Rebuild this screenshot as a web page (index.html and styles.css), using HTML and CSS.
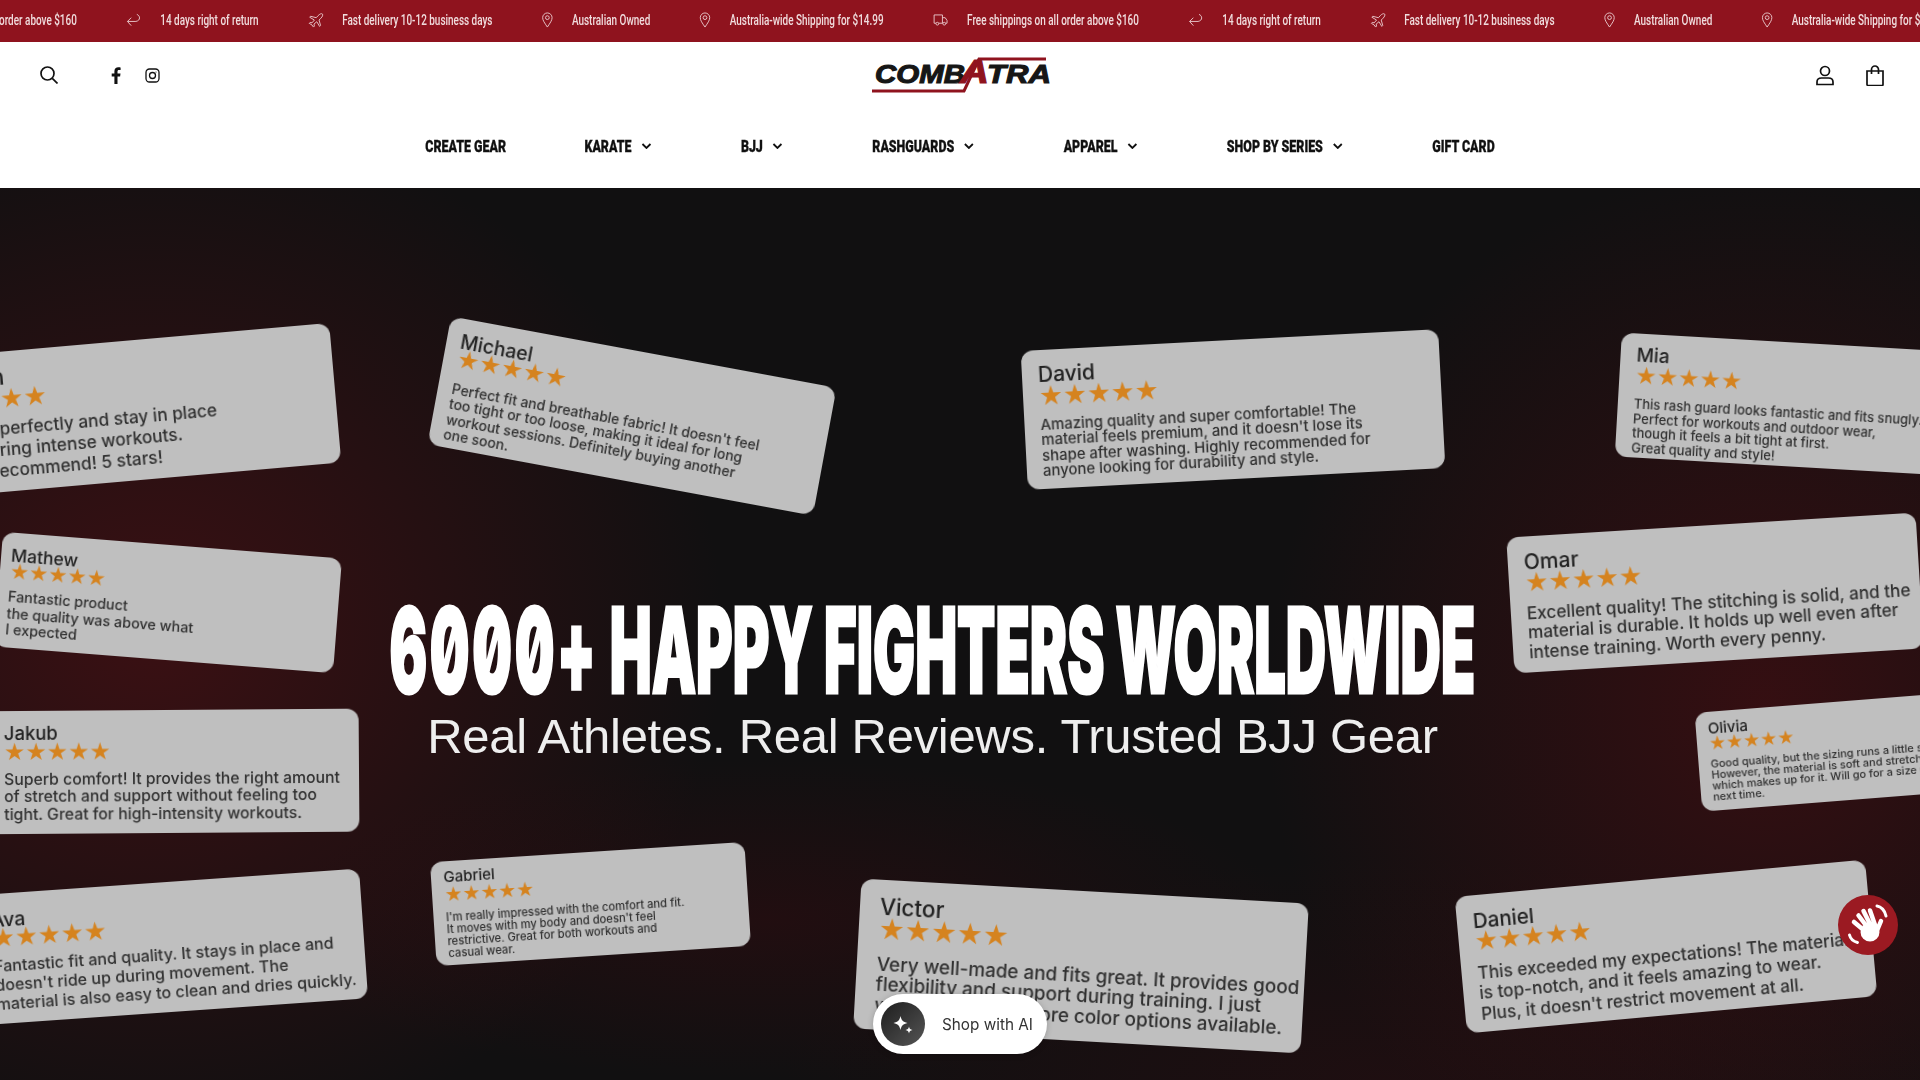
FILE: index.html
```html
<!DOCTYPE html>
<html lang="en">
<head>
	<title>Combatra</title>
	<meta charset="UTF-8">
	<meta name="viewport" content="width=device-width, initial-scale=1.0">
	<link rel="stylesheet" href="styles.css">
</head>
<body>
	<svg class="defs" width="0" height="0">
		<symbol id="i-return" viewBox="0 0 16 16"><path d="M11 1.5c3.5 1 4.5 6.5-1 7.5H1M5 5 1 9l4 4.500"/></symbol>
		<symbol id="i-plane" viewBox="0 0 16 16"><path d="M15 1c-1-.8-3 .2-4.500 1.800L8.500 5 2.500 3.500 1.500 4.500 6.500 7.500 4 10.500 2 10 1 11l3 1.800L5.500 15l1-1-.4-2.200 3-2.500 3 5 1-1L11.500 7.500l2-2C15 4 16 2 15 1Z"/></symbol>
		<symbol id="i-pin" viewBox="0 0 12 17"><path d="M6 16C3 11.500 1 9 1 6a5 5 0 0 1 10 0c0 3-2 5.500-5 10Z"/><circle cx="6" cy="6" r="2"/></symbol>
		<symbol id="i-truck" viewBox="0 0 16 13"><path d="M3 10H1V1h9v9H6M10 4h3l2 3v3h-1.500M10 10h.5"/><circle cx="4.500" cy="10.500" r="1.500"/><circle cx="12" cy="10.500" r="1.500"/></symbol>
		<symbol id="i-chev" viewBox="0 0 10 6"><path d="M1 1l4 4 4-4"/></symbol>
	</svg>

	<div class="announce">
		<div class="ticker">
			<div class="tick"><span>Free shippings on all order above $160</span></div>
			<div class="tick"><svg class="tick-icon"><use href="#i-return"/></svg><span>14 days right of return</span></div>
			<div class="tick"><svg class="tick-icon"><use href="#i-plane"/></svg><span>Fast delivery 10-12 business days</span></div>
			<div class="tick"><svg class="tick-icon tick-pin"><use href="#i-pin"/></svg><span>Australian Owned</span></div>
			<div class="tick"><svg class="tick-icon tick-pin"><use href="#i-pin"/></svg><span>Australia-wide Shipping for $14.99</span></div>
			<div class="tick"><svg class="tick-icon tick-truck"><use href="#i-truck"/></svg><span>Free shippings on all order above $160</span></div>
			<div class="tick"><svg class="tick-icon"><use href="#i-return"/></svg><span>14 days right of return</span></div>
			<div class="tick"><svg class="tick-icon"><use href="#i-plane"/></svg><span>Fast delivery 10-12 business days</span></div>
			<div class="tick"><svg class="tick-icon tick-pin"><use href="#i-pin"/></svg><span>Australian Owned</span></div>
			<div class="tick"><svg class="tick-icon tick-pin"><use href="#i-pin"/></svg><span>Australia-wide Shipping for $14.99</span></div>
		</div>
	</div>

	<header class="site-head">
		<div class="top-row">
			<div class="top-left">
				<svg class="ico ico-search" viewBox="0 0 18 18"><circle cx="7.500" cy="7.500" r="6.500"/><path d="M12.300 12.300 17.500 17.500"/></svg>
				<svg class="ico-fb" viewBox="0 0 10 17"><path d="M6.500 17V9.400h2.600l.4-3H6.500V4.600c0-.9.300-1.500 1.500-1.500h1.600V.4C9.300.3 8.400.2 7.300.2 5 .2 3.400 1.600 3.400 4.200v2.200H.7v3h2.700V17Z"/></svg>
				<svg class="ico ico-ig" viewBox="0 0 15 15"><rect x="1" y="1" width="13" height="13" rx="3.500"/><circle cx="7.500" cy="7.500" r="3"/><circle class="dot" cx="11" cy="4" r=".6"/></svg>
			</div>
			<a class="logo" href="#">
				<svg viewBox="0 0 180 36" width="180" height="36">
					<path class="logo-line" d="M0 34H92L107 2H174" />
					<text class="logo-text" x="3" y="26" textLength="90" lengthAdjust="spacingAndGlyphs">COMB</text>
					<text class="logo-text logo-a" x="88" y="26" textLength="29" lengthAdjust="spacingAndGlyphs">A</text>
					<text class="logo-text" x="115" y="26" textLength="64" lengthAdjust="spacingAndGlyphs">TRA</text>
				</svg>
			</a>
			<div class="top-right">
				<svg class="ico ico-user" viewBox="0 0 18 20"><circle cx="9" cy="5.500" r="4.500"/><path d="M1 19v-2.500C1 14 3 12.500 5.500 12.500h7c2.500 0 4.500 1.500 4.500 4V19Z"/></svg>
				<svg class="ico ico-bag" viewBox="0 0 18 21"><path d="M1 6h16v13.500a1 1 0 0 1-1 1H2a1 1 0 0 1-1-1ZM5.500 9V4.500a3.500 3.500 0 0 1 7 0V9"/></svg>
			</div>
		</div>
		<nav class="main-nav">
			<a class="nav-first" href="#">CREATE GEAR</a>
			<a href="#">KARATE <svg class="chev"><use href="#i-chev"/></svg></a>
			<a href="#">BJJ <svg class="chev"><use href="#i-chev"/></svg></a>
			<a href="#">RASHGUARDS <svg class="chev"><use href="#i-chev"/></svg></a>
			<a href="#">APPAREL <svg class="chev"><use href="#i-chev"/></svg></a>
			<a href="#">SHOP BY SERIES <svg class="chev"><use href="#i-chev"/></svg></a>
			<a href="#">GIFT CARD</a>
		</nav>
	</header>

	<section class="hero">
		<article class="card card-jordan">
			<h3>Jordan</h3>
			<div class="stars">★★★★★</div>
			<p>They fit perfectly and stay in place<br>even during intense workouts.<br>Highly recommend! 5 stars!</p>
		</article>
		<article class="card card-michael">
			<h3>Michael</h3>
			<div class="stars">★★★★★</div>
			<p>Perfect fit and breathable fabric! It doesn't feel<br>too tight or too loose, making it ideal for long<br>workout sessions. Definitely buying another<br>one soon.</p>
		</article>
		<article class="card card-david">
			<h3>David</h3>
			<div class="stars">★★★★★</div>
			<p>Amazing quality and super comfortable! The<br>material feels premium, and it doesn't lose its<br>shape after washing. Highly recommended for<br>anyone looking for durability and style.</p>
		</article>
		<article class="card card-mia">
			<h3>Mia</h3>
			<div class="stars">★★★★★</div>
			<p>This rash guard looks fantastic and fits snugly.<br>Perfect for workouts and outdoor wear,<br>though it feels a bit tight at first.<br>Great quality and style!</p>
		</article>
		<article class="card card-mathew">
			<h3>Mathew</h3>
			<div class="stars">★★★★★</div>
			<p>Fantastic product<br>the quality was above what<br>I expected</p>
		</article>
		<article class="card card-omar">
			<h3>Omar</h3>
			<div class="stars">★★★★★</div>
			<p>Excellent quality! The stitching is solid, and the<br>material is durable. It holds up well even after<br>intense training. Worth every penny.</p>
		</article>
		<article class="card card-jakub">
			<h3>Jakub</h3>
			<div class="stars">★★★★★</div>
			<p>Superb comfort! It provides the right amount<br>of stretch and support without feeling too<br>tight. Great for high-intensity workouts.</p>
		</article>
		<article class="card card-olivia">
			<h3>Olivia</h3>
			<div class="stars">★★★★★</div>
			<p>Good quality, but the sizing runs a little small.<br>However, the material is soft and stretchable,<br>which makes up for it. Will go for a size up<br>next time.</p>
		</article>
		<article class="card card-ava">
			<h3>Ava</h3>
			<div class="stars">★★★★★</div>
			<p>Fantastic fit and quality. It stays in place and<br>doesn't ride up during movement. The<br>material is also easy to clean and dries quickly.</p>
		</article>
		<article class="card card-gabriel">
			<h3>Gabriel</h3>
			<div class="stars">★★★★★</div>
			<p>I'm really impressed with the comfort and fit.<br>It moves with my body and doesn't feel<br>restrictive. Great for both workouts and<br>casual wear.</p>
		</article>
		<article class="card card-victor">
			<h3>Victor</h3>
			<div class="stars">★★★★★</div>
			<p>Very well-made and fits great. It provides good<br>flexibility and support during training. I just<br>wish there were more color options available.</p>
		</article>
		<article class="card card-daniel">
			<h3>Daniel</h3>
			<div class="stars">★★★★★</div>
			<p>This exceeded my expectations! The material<br>is top-notch, and it feels amazing to wear.<br>Plus, it doesn't restrict movement at all.</p>
		</article>

		<div class="hero-copy">
			<h1><span class="count">6000+</span> HAPPY FIGHTERS WORLDWIDE</h1>
			<h2>Real Athletes. Real Reviews. Trusted BJJ Gear</h2>
		</div>
	</section>

	<button class="shop-ai">
		<span class="shop-ai-dot">
			<svg viewBox="0 0 44 44" width="44" height="44"><path d="M19.500 14c1 4.500 2.500 6 7 7-4.500 1-6 2.500-7 7-1-4.500-2.500-6-7-7 4.500-1 6-2.500 7-7ZM28 24.500c.5 2.200 1.300 3 3.500 3.500-2.200.5-3 1.300-3.500 3.500-.5-2.200-1.300-3-3.500-3.500 2.200-.5 3-1.300 3.500-3.500Z"/></svg>
		</span>
		Shop with AI
	</button>

	<div class="chat-bubble">
		<svg viewBox="0 0 60 60" width="60" height="60">
			<g class="hand">
				<path d="M16 27 28 37M20.500 20.500 30 33M25.500 16 33 31M32 15.500 37 30M43 26 38 38"/>
				<circle cx="32" cy="37" r="9.500"/>
			</g>
			<path class="wave" d="M39 11c4 .5 8 4.500 9 10M11.500 40c1 4 4 6.500 8 7.500"/>
		</svg>
	</div>
</body>
</html>
```

FILE: styles.css
```css
* {box-sizing: border-box;}
html, body {height: 100%;}
body {
	margin: 0;
	overflow: hidden;
	background: #111;
	font-family: "Inter", "Liberation Sans", sans-serif;
}
.defs {position: absolute;}
a {color: inherit; text-decoration: none;}

/* announcement bar, no condensed font here so the strip is squeezed */
.announce {
	height: 42px;
	overflow: hidden;
	background: #8f131e;
	color: #f0dcdd;
}
.ticker {
	--sq: .71;
	display: flex;
	align-items: center;
	gap: calc(49.500px / var(--sq));
	height: 100%;
	padding-bottom: 2px;
	margin-left: -95px;
	width: max-content;
	font-family: "Roboto", sans-serif;
	font-size: 14px;
	font-weight: 500;
	white-space: nowrap;
	transform: scaleX(var(--sq));
	transform-origin: left center;
}
.tick {
	display: flex;
	align-items: center;
	gap: calc(19px / var(--sq));
}
.tick-icon {
	width: calc(15px / var(--sq));
	height: 15px;
	fill: none;
	stroke: #e9c9cc;
	stroke-width: 1;
	transform: scaleX(calc(1 / var(--sq)));
}
.tick-pin {width: calc(11px / var(--sq)); height: 16px;}
.tick-truck {height: 12px;}

/* header */
.site-head {
	height: 146px;
	background: #fff;
	color: #111;
}
.top-row {
	display: grid;
	grid-template-columns: 1fr auto 1fr;
	align-items: center;
	height: 66px;
	padding: 0 36px 0 40px;
}
.top-left, .top-right {display: flex; align-items: center;}
.top-right {justify-content: flex-end; gap: 32px;}
.ico {
	fill: none;
	stroke: #111;
	stroke-width: 1.7;
}
.ico-search {width: 18px; height: 18px; margin-right: 53px;}
.ico-fb {width: 10px; height: 17px; margin-right: 24px; fill: #111;}
.ico-ig {width: 15px; height: 15px; stroke-width: 1.3;}
.ico-ig .dot {fill: #111; stroke: none;}
.ico-user, .ico-bag {width: 18px; height: 21px;}
.logo {display: block; height: 36px;}
.logo-line {fill: none; stroke: #8f131e; stroke-width: 3;}
.logo-text {
	font-family: "Liberation Sans", sans-serif;
	font-size: 26px;
	font-weight: 700;
	font-style: italic;
	fill: #161616;
	stroke: #161616;
	stroke-width: 1.1;
}
.logo-a {fill: #8f131e; stroke: #8f131e; font-size: 33px;}

.main-nav {
	--sq: .775;
	display: flex;
	justify-content: center;
	align-items: center;
	gap: calc(89.500px / var(--sq));
	height: 78px;
	padding-bottom: 2px;
	font-family: "Roboto", sans-serif;
	font-weight: 900;
	font-size: 16px;
	-webkit-text-stroke: .3px #111;
	transform: scaleX(var(--sq));
}
.main-nav a {display: flex; align-items: center; gap: calc(10px / var(--sq)); white-space: nowrap;}
.main-nav .nav-first {margin-right: calc(-11px / var(--sq));}
.chev {
	width: calc(10px / var(--sq));
	height: 6px;
	fill: none;
	stroke: #111;
	stroke-width: 1.8;
	transform: scaleX(calc(1 / var(--sq)));
}

/* hero, the review cards sit on it as on a free canvas */
.hero {
	position: relative;
	height: 892px;
	overflow: hidden;
	background:
		radial-gradient(ellipse 570px 520px at 8% 50%, rgba(78, 16, 20, .68), transparent),
		radial-gradient(ellipse 500px 540px at 92% 58%, rgba(70, 14, 18, .68), transparent),
		radial-gradient(ellipse 520px 160px at 40% 82%, rgba(50, 12, 16, .5), transparent),
		radial-gradient(ellipse 600px 220px at 72% 100%, rgba(50, 12, 16, .4), transparent),
		#111011;
}
.card {
	position: absolute;
	padding: var(--pt) 0 0 var(--pl);
	border-radius: 12px;
	background: #bfbfbf;
	color: #303030;
	filter: blur(.35px);
	white-space: nowrap;
}
.card h3 {
	margin: 0;
	font-size: var(--name);
	font-weight: 500;
	line-height: var(--d);
	color: #222;
}
.stars {
	font-family: "DejaVu Sans", sans-serif;
	font-size: calc(var(--star) * 1.193);
	line-height: var(--d);
	color: #d5831f;
}
.card p {
	margin: var(--m) 0 0;
	font-size: var(--text);
	font-weight: 500;
	line-height: var(--lh);
}
.card-jordan {left: -84px; top: 153px; width: 420px; height: 140px; transform: rotate(-5deg);
	--pl: 15px; --pt: 14px; --d: 22px; --m: 7.500px; --lh: 21px; --text: 17.300px; --name: 23px; --star: 22px;}
.card-michael {left: 436px; top: 163px; width: 392px; height: 130px; transform: rotate(10.500deg);
	--pl: 14px; --pt: 14.500px; --d: 17px; --m: 14px; --lh: 15.500px; --text: 14px; --name: 19.500px; --star: 20.800px;}
.card-david {left: 1024px; top: 151.500px; width: 418px; height: 139px; transform: rotate(-3deg);
	--pl: 16px; --pt: 13.500px; --d: 21px; --m: 12px; --lh: 15.500px; --text: 14.900px; --name: 21px; --star: 22.400px;}
.card-mia {left: 1618px; top: 156px; width: 400px; height: 124px; transform: rotate(3.300deg);
	--pl: 16px; --pt: 12px; --d: 20px; --m: 11px; --lh: 14.500px; --text: 13px; --name: 19px; --star: 20px;}
.card-mathew {left: -2px; top: 356.500px; width: 340px; height: 115px; transform: rotate(4.500deg);
	--pl: 10px; --pt: 15px; --d: 16px; --m: 9px; --lh: 16.500px; --text: 14.400px; --name: 17.500px; --star: 18px;}
.card-omar {left: 1510px; top: 337px; width: 410px; height: 136px; transform: rotate(-3.500deg);
	--pl: 16px; --pt: 14.500px; --d: 21px; --m: 10px; --lh: 19.500px; --text: 17.200px; --name: 21px; --star: 22px;}
.card-jakub {left: -30px; top: 522px; width: 389px; height: 123px; transform: rotate(-.4deg);
	--pl: 34px; --pt: 12.500px; --d: 19px; --m: 9px; --lh: 17.500px; --text: 15.800px; --name: 18.500px; --star: 20px;}
.card-olivia {left: 1698px; top: 512.500px; width: 300px; height: 99px; transform: rotate(-4.500deg);
	--pl: 12px; --pt: 8.700px; --d: 15.500px; --m: 7px; --lh: 11px; --text: 11px; --name: 15px; --star: 16px;}
.card-ava {left: -26px; top: 694px; width: 390px; height: 130px; transform: rotate(-4deg);
	--pl: 19px; --pt: 17px; --d: 18px; --m: 9.500px; --lh: 19px; --text: 16.100px; --name: 19.500px; --star: 21.500px;}
.card-gabriel {left: 432.500px; top: 664px; width: 315px; height: 104px; transform: rotate(-3.700deg);
	--pl: 12.500px; --pt: 8px; --d: 16.500px; --m: 8.500px; --lh: 12px; --text: 11.200px; --name: 15px; --star: 16.800px;}
.card-victor {left: 857px; top: 703px; width: 448px; height: 150px; transform: rotate(3.200deg);
	--pl: 20px; --pt: 14.500px; --d: 23px; --m: 14px; --lh: 20.500px; --text: 18.900px; --name: 22.500px; --star: 24.400px;}
.card-daniel {left: 1460px; top: 689.500px; width: 412px; height: 137px; transform: rotate(-5.200deg);
	--pl: 16px; --pt: 14.700px; --d: 21.500px; --m: 10px; --lh: 20.500px; --text: 17.200px; --name: 20.500px; --star: 22px;}

.hero-copy {
	position: absolute;
	inset: 0;
	display: flex;
	flex-direction: column;
	align-items: center;
	padding: 401px 55px 0 0;
	color: #fff;
	white-space: nowrap;
}
.hero-copy h1 {
	margin: 0;
	font-size: 118px;
	font-weight: 900;
	line-height: 122px;
	font-feature-settings: "zero" 1;
	transform: scaleX(.474);
	-webkit-text-stroke: 3px #fff;
}
.hero-copy .count {letter-spacing: 5.600px;}
.hero-copy h2 {
	margin: -3px 0 0;
	font-family: "Liberation Sans", sans-serif;
	font-size: 49px;
	font-weight: 400;
	letter-spacing: -.3px;
	line-height: 56px;
	color: #eee;
}

/* floating widgets */
.shop-ai {
	position: fixed;
	left: 873px;
	top: 994px;
	display: flex;
	align-items: center;
	gap: 17px;
	width: 174px;
	height: 60px;
	padding: 0 0 0 8px;
	border: 0;
	border-radius: 30px;
	background: #fff;
	color: #333;
	font-family: "Inter", sans-serif;
	font-size: 15.300px;
	box-shadow: 0 1px 6px rgba(0, 0, 0, .2);
}
.shop-ai-dot {
	width: 44px;
	height: 44px;
	border-radius: 50%;
	background: linear-gradient(135deg, #1d1d1d, #555);
}
.shop-ai-dot svg {display: block; fill: #fff;}
.chat-bubble {
	position: fixed;
	left: 1838px;
	top: 895px;
	width: 60px;
	height: 60px;
	border-radius: 50%;
	background: #9b1a22;
}
.chat-bubble svg {display: block;}
.hand {fill: #fff; stroke: #fff; stroke-width: 4.500; stroke-linecap: round;}
.hand circle {stroke: none;}
.wave {fill: none; stroke: #fff; stroke-width: 3; stroke-linecap: round;}
```
